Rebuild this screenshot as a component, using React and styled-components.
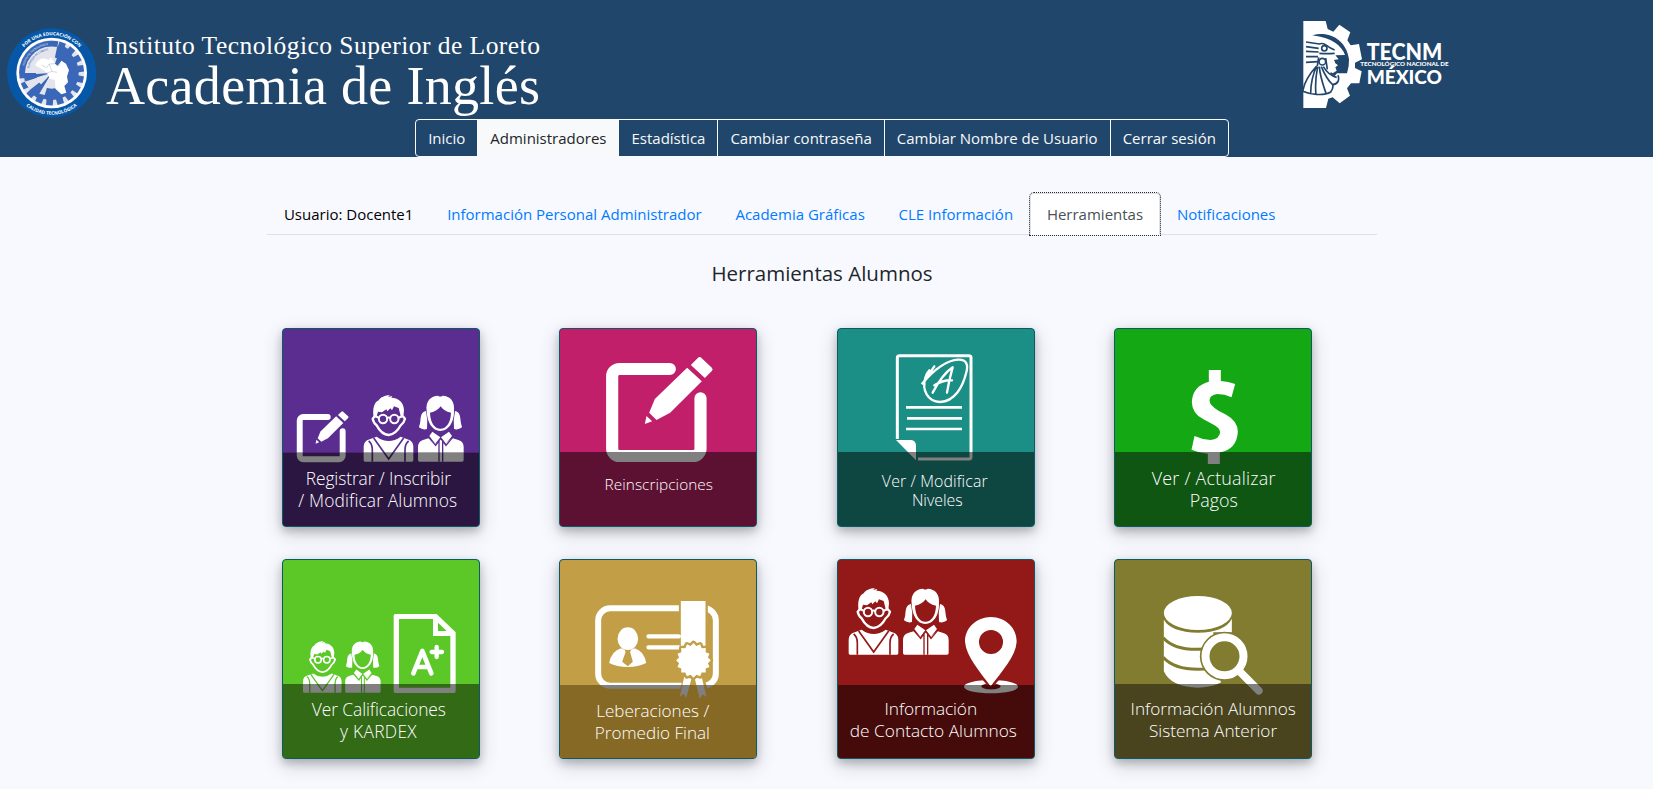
import React from 'react';
import styled, { createGlobalStyle, css } from 'styled-components';

const GlobalStyle = createGlobalStyle`
  * { box-sizing: border-box; }
  body {
    margin: 0;
    background: #f8f9ff;
    color: #212529;
    font-family: "Open Sans", "Noto Sans", sans-serif;
    font-size: 15px;
  }
`;

/* ---------- header ---------- */

const Header = styled.header`
  height: 157px;
  padding-right: 9px;
  background: #21466c;
  display: flex;
  flex-direction: column;
  align-items: center;
`;

const BrandRow = styled.div`
  align-self: stretch;
  height: 119px;
  display: flex;
  justify-content: space-between;
  align-items: flex-start;
  padding: 20px 194px 0 6px;
`;

const Brand = styled.div`
  display: flex;
  gap: 9px;
`;

const Seal = styled.svg`
  width: 91px;
  height: 90px;
  margin-top: 8px;
  font-family: "Open Sans", sans-serif;
`;

const BrandText = styled.div`
  padding-top: 11px;
  color: #fff;
  font-family: "Liberation Serif", serif;
  white-space: nowrap;
`;

const Institute = styled.div`
  font-size: 25.5px;
  line-height: 30px;
  letter-spacing: 0.47px;
`;

const Academy = styled.div`
  font-size: 54px;
  line-height: 50px;
  letter-spacing: 0.3px;
`;

const TecLogo = styled.svg`
  width: 148px;
  height: 90px;
  font-family: Lato, sans-serif;
`;

const Nav = styled.nav`
  display: flex;
`;

const NavButton = styled.a`
  height: 38px;
  padding: 0 12px;
  border: 1px solid #f8f9fa;
  color: #f8f9fa;
  line-height: 36px;
  white-space: nowrap;
  & + & { margin-left: -1px; }
  &:first-child { border-radius: 4px 0 0 4px; }
  &:last-child { border-radius: 0 4px 4px 0; }
  ${(p) => p.$active && css`
    background: #f8f9fa;
    color: #212529;
  `}
`;

/* ---------- content ---------- */

const Page = styled.div`
  padding-right: 9px;
`;

const Container = styled.main`
  width: 1110px;
  margin: 0 auto;
  padding-top: 36px;
`;

const Tabs = styled.div`
  display: flex;
  height: 42px;
  border-bottom: 1px solid #dee2e6;
`;

const Tab = styled.a`
  height: 42px;
  padding: 0 15.9px;
  border: 1px solid transparent;
  border-radius: 4px 4px 0 0;
  color: ${(p) => (p.$plain ? '#000' : '#007bff')};
  line-height: 40px;
  white-space: nowrap;
  ${(p) => p.$active && css`
    background: #fff;
    color: #495057;
    border-color: #dee2e6 #dee2e6 #fff;
    outline: 1px dotted #212529;
  `}
`;

const Title = styled.h4`
  margin: 0;
  height: 93px;
  padding-top: 23px;
  font-size: 20.5px;
  font-weight: 400;
  line-height: 30px;
  text-align: center;
`;

const Grid = styled.div`
  display: grid;
  grid-template-columns: 277px 278px 277px 278px;
  row-gap: 32px;
  padding-bottom: 30px;
`;

const Tile = styled.a`
  position: relative;
  width: 198px;
  height: ${(p) => p.$height}px;
  margin-left: 15px;
  border: 1px solid #0b5a68;
  border-radius: 4px;
  overflow: hidden;
  background: ${(p) => p.$bg};
  text-decoration: none;
  box-shadow: 0 4px 8px rgba(0, 0, 0, 0.2), 0 6px 20px rgba(0, 0, 0, 0.19);
`;

const Art = styled.svg`
  position: absolute;
  inset: 0;
  width: 100%;
  height: 100%;
`;

const Ink = styled.g`
  color: ${(p) => p.$ink};
  --cut: ${(p) => p.$cut};
  fill: currentColor;
  .line { fill: none; stroke: currentColor; }
  .cut { fill: var(--cut); }
  .cutline { fill: none; stroke: var(--cut); }
`;

const Caption = styled.div`
  position: relative;
  padding-top: ${(p) => p.$top - 1.6}px;
  color: #fff;
  font-weight: 300;
  font-size: ${(p) => p.$size}px;
  line-height: ${(p) => p.$leading || 22}px;
  text-align: center;
  white-space: nowrap;
`;

const Line = styled.div`
  margin-left: ${(p) => p.$shift * 2}px;
  letter-spacing: ${(p) => p.$track}px;
`;

/* ---------- drawings ---------- */

function Edit() {
  return (
    <g>
      <path className="line" strokeWidth="36.5" strokeLinecap="round" d="M375 162H224a22 22 0 0 0-22 22V401a22 22 0 0 0 22 22H445a22 22 0 0 0 22-22V250" />
      <path d="M438 150 459 129q5-6 11 0L501 158q5 5 0 10L480 189Z" />
      <path d="M427 158 471 199 376 293 335 315 313 293 330 252Z" />
      <path d="M305 303 322 319 300 327Z" />
    </g>
  );
}

function Kids() {
  return (
    <g>
      <path d="M311 307C307 282 312 262 326 256 331 247 345 241 360 241L354 246 367 243 364 248C388 249 402 264 402 286L400 307H393L386 279 372 274 366 286 361 280 352 289 349 283 336 292 324 290 319 307Z" />
      <path className="line" strokeWidth="7" strokeLinejoin="round" d="M315 303 308 311Q311 325 320 331 335 359 356 360 378 358 392 331 402 324 405 311L398 303" />
      <g className="line" strokeWidth="6">
        <circle cx="339" cy="312" r="12.5" />
        <circle cx="373" cy="312" r="12.5" />
        <path d="M350 310Q356 305 362 310M327 309 316 303M385 309 397 303" />
      </g>
      <path d="M281 436V395Q281 378 299 373L320 365Q356 391 392 365L412 373Q430 378 430 395V436Q430 440 426 440H285Q281 440 281 436Z" />
      <path className="cutline" strokeWidth="5" d="M311 369 356 432 401 369M296 378Q307 386 307 405V440M416 378Q405 386 405 405V440" />

      <path fillRule="evenodd" d="M470 288C466 257 484 242 504 242Q511 247 518 242C540 243 555 258 552 288 553 321 535 348 511 348 487 348 471 321 470 288ZM480 293C481 323 494 341 511 341 529 341 542 323 543 293 528 290 518 284 512 274 505 284 495 290 480 293Z" />
      <path d="M468 288C454 290 452 304 451 319 450 329 448 330 447 337Q458 346 471 342 474 315 468 288ZM555 288C569 290 571 304 572 319 573 329 575 330 576 337Q565 346 552 342 549 315 555 288Z" />
      <path d="M444 435V396Q444 380 459 375L478 369 498 388 509 373H514L526 388 546 369 565 375Q581 380 581 396V435Q581 440 576 440H449Q444 440 444 435Z" />
      <path d="M487 350 511 367 496 386 478 363ZM537 350 513 367 528 386 546 363Z" />
      <path className="cutline" strokeWidth="4" d="M474 365 497 391 512 370 528 391 550 365M507 374V440M518 376V440" />
    </g>
  );
}

const RegisterArt = () => (
  <>
    <g transform="translate(-9 227.4) scale(.486 .485)"><Edit /></g>
    <Kids />
  </>
);

const LevelsArt = () => (
  <>
    <path className="line" strokeWidth="9" d="M217 372V128Q217 122 223 122H432Q438 122 438 128V426Q438 432 432 432H279" />
    <path d="M213 375H258Q273 377 273 393V436Z" />
    <path className="line" strokeWidth="8" d="M243 277H411M246 310H411M243 342H411" />
    <path className="line" strokeWidth="7" strokeLinecap="round" d="M328 154C318 168 306 190 290 208 320 172 360 136 400 134 425 133 430 150 424 172 414 214 390 260 345 261 308 260 290 226 301 188Q304 176 313 166" />
    <path className="line" strokeWidth="7" strokeLinecap="round" strokeLinejoin="round" d="M323 233Q352 178 383 157 372 195 366 233M328 211Q355 194 381 196" />
  </>
);

const PaymentArt = () => (
  <>
    <path d="M327 165H363V198Q386 200 406 207L395 247Q374 237 353 237 330 239 329 256 329 272 356 287L379 299Q414 318 414 350 411 403 360 412V447H324V416Q298 414 275 404L284 363Q308 374 332 375 358 374 361 352 360 337 336 326L311 313Q276 295 276 260 279 213 327 200Z" />
  </>
);

const GradesArt = () => (
  <>
    <g transform="translate(-119 102) scale(.776)"><Kids /></g>
    <path fillRule="evenodd" d="M376 207H500L557 262V439Q557 444 552 444H376Q371 444 371 439V212Q371 207 376 207ZM387 222V428H541V273H489V222ZM504 233V258H530Z" />
    <path className="line" strokeWidth="14" strokeLinecap="round" strokeLinejoin="round" d="M430 385 457 318 484 385M440 366H474" />
    <path className="line" strokeWidth="13" strokeLinecap="round" d="M500 306V336M485 321H516" />
  </>
);

const star = Array.from({ length: 32 }, (_, i) => {
  const r = i % 2 ? 44 : 52;
  const a = (i * Math.PI) / 16;
  return `${(446 + r * Math.sin(a)).toFixed(1)},${(346 - r * Math.cos(a)).toFixed(1)}`;
}).join(' ');

const ReleaseArt = () => (
  <>
    <rect className="line" strokeWidth="18" x="160" y="190" width="353" height="232" rx="36" />
    <path className="cut" d="M402 175H489V300H402Z" />
    <ellipse cx="249" cy="281" rx="31" ry="34" />
    <path d="M193 354Q200 318 229 310 249 322 269 310 298 318 304 354 280 366 249 366 217 366 193 354Z" />
    <path className="cut" d="M240 315H258L256 322 264 350 249 364 232 350 242 322Z" />
    <path className="line" strokeWidth="13" strokeLinecap="round" d="M311 274H402M311 307H402" />
    <path d="M408 168H482V306H408Z" />
    <path className="cut" d="M414 400 400 458H496L478 398Z" />
    <path d="M418 396 440 401 424 459 417 446 405 455ZM450 401 470 394 485 456 473 448 465 462Z" />
    <polygon className="cutline" strokeWidth="14" strokeLinejoin="round" points={star} />
    <polygon strokeLinejoin="round" points={star} />
  </>
);

const ContactArt = () => (
  <>
    <g transform="translate(-210 -111)"><Kids /></g>
    <ellipse cx="498" cy="425" rx="81" ry="20" />
    <ellipse className="cut" cx="498" cy="424" rx="29" ry="9" />
    <path className="cutline" strokeWidth="12" d="M464 384 497 424 532 384" />
    <path fillRule="evenodd" d="M498 216C542 217 575 248 575 290 572 336 530 378 497 424 464 378 424 336 420 290 420 248 454 217 498 216ZM498 255A36 36 0 1 0 498 327 36 36 0 1 0 498 255Z" />
  </>
);

const ArchiveArt = () => (
  <>
    <ellipse cx="294" cy="204" rx="102" ry="51" />
    <path d="M192 224Q213 261 294 263 376 261 396 221V375Q376 426 294 428 213 426 192 379Z" />
    <path className="cutline" strokeWidth="9" d="M190 278Q222 314 294 313 340 313 370 300M190 337Q222 373 294 373 330 373 350 368" />
    <path className="cut" d="M340 262H400V430H366Z" />
    <circle className="cut" cx="374" cy="334" r="74" />
    <circle className="line" strokeWidth="24" cx="374" cy="334" r="57" />
    <path className="line" strokeWidth="23" strokeLinecap="round" d="M416 376 477 437" />
  </>
);

const tiles = [
  { id: 'registrar', art: RegisterArt, bg: '#5b2d90', band: '#2b1641', split: 413, top: 139.3, size: 17.4,
    lines: [['Registrar / Inscribir', -2.7, -0.1], ['/ Modificar Alumnos', -3.2, 0.14]] },
  { id: 'reinscribir', art: Edit, bg: '#c21f6a', band: '#5c1032', split: 411, top: 147, size: 15.4,
    lines: [['Reinscripciones', 0.8, 0.05]] },
  { id: 'niveles', art: LevelsArt, bg: '#1b8e85', band: '#0e4642', split: 411, top: 144.3, size: 15.9, leading: 19.7,
    lines: [['Ver / Modificar', -1.2, 0.1], ['Niveles', 1.3, 0]] },
  { id: 'pagos', art: PaymentArt, bg: '#14a815', band: '#0f5612', split: 411, top: 140, size: 17.9,
    lines: [['Ver / Actualizar', 0.7, 0.2], ['Pagos', 0.8, 0]] },
  { id: 'kardex', art: GradesArt, bg: '#5cc828', band: '#326a16', split: 417, top: 139.6, size: 17.4,
    lines: [['Ver Calificaciones', -2.2, -0.1], ['y KARDEX', -2.5, 0.3]] },
  { id: 'liberaciones', art: ReleaseArt, bg: '#c29e46', band: '#876926', split: 420, top: 141.6, size: 17.1,
    lines: [['Leberaciones /', -5.3, 0], ['Promedio Final', -5.6, 0]] },
  { id: 'contacto', art: ContactArt, bg: '#931818', band: '#450b0b', split: 420, top: 140, size: 17.3,
    lines: [['Información', -5.2, -0.1], ['de Contacto Alumnos', -2.7, 0]] },
  { id: 'anterior', art: ArchiveArt, bg: '#817c2f', band: '#49441d', split: 417, top: 140, size: 17.2,
    lines: [['Información Alumnos', 0.2, 0], ['Sistema Anterior', 0, 0]] },
];

function ToolTile({ tile, index }) {
  const x = index % 2 ? 45.5 : 39;
  const y = index < 4 ? 42 : 45;
  const h = index < 4 ? 591 : 594;
  const Drawing = tile.art;
  return (
    <Tile href="#" $bg={tile.bg} $height={index < 4 ? 199 : 200}>
      <Art viewBox={`${x} ${y} 588 ${h}`} preserveAspectRatio="none" aria-hidden="true">
        <clipPath id={tile.id}>
          <rect x="0" y={tile.split} width="700" height="300" />
        </clipPath>
        <Ink $ink="#fff" $cut={tile.bg}><Drawing /></Ink>
        <rect x="0" y={tile.split} width="700" height="300" fill={tile.band} />
        <Ink $ink="#808080" $cut={tile.band} clipPath={`url(#${tile.id})`}><Drawing /></Ink>
      </Art>
      <Caption $top={tile.top} $size={tile.size} $leading={tile.leading}>
        {tile.lines.map(([text, shift, track]) => (
          <Line key={text} $shift={shift} $track={track}>{text}</Line>
        ))}
      </Caption>
    </Tile>
  );
}

const teeth = Array.from({ length: 13 }, (_, i) => 20 + i * 20.5);

function SchoolSeal() {
  return (
    <Seal viewBox="18 25 273 270" aria-hidden="true">
      <defs>
        <path id="arcTop" d="M42 160A113 113 0 0 1 268 160" />
        <path id="arcBottom" d="M30 160A125 125 0 0 0 280 160" />
        <path id="arcInner" d="M70 160A85 85 0 0 1 155 75" />
        <path id="arcInner2" d="M86 160A69 69 0 0 1 155 91" />
      </defs>
      <circle cx="155" cy="160" r="134" fill="#0657a8" />
      <circle cx="155" cy="160" r="106" fill="#fff" />
      <circle cx="155" cy="160" r="98" fill="#e4e5ec" />
      <circle cx="155" cy="160" r="64" fill="none" stroke="#3a67b7" strokeWidth="34" />
      <g fill="#3a67b7">
        {teeth.map((a) => (
          <path key={a} d="M145 63H165V85H145Z" transform={`rotate(${a} 155 160)`} />
        ))}
      </g>
      <path d="M155 160H57A98 98 0 0 1 175 64Z" fill="#e4e5ec" />
      <path d="M57 160A98 98 0 0 1 175 65L172 82A80 80 0 0 0 75 160Z" fill="#3a67b7" />
      <path d="M155 160 72 165 74 184ZM155 160 96 223 113 236ZM155 160 185 75 210 92Z" fill="#3a67b7" />
      <path d="M155 160 74 186 90 210ZM155 160 118 222 134 226Z" fill="#e4e5ec" />
      <path d="M105 137Q113 118 132 116L146 121 153 113 165 132 177 142 184 123 198 132 207 152 201 170 204 188 193 199 199 219 184 224 166 207 165 181 149 177 142 160 121 146Z" fill="#fff" />
      <path d="M126 137 140 144 148 133 165 132M148 133 156 155 171 158M142 160 156 155" fill="none" stroke="#c4c7d6" strokeWidth="2" />
      <g fill="#fff" fontSize="14" fontWeight="700">
        <text textAnchor="middle"><textPath href="#arcTop" startOffset="50%">POR UNA EDUCACIÓN CON</textPath></text>
        <text textAnchor="middle"><textPath href="#arcBottom" startOffset="50%">CALIDAD TECNOLÓGICA</textPath></text>
      </g>
      <g fontSize="8" fontWeight="600">
        <text fill="#dfe5f5" textAnchor="middle"><textPath href="#arcInner" startOffset="54%">INSTITUTO TECNOLÓGICO</textPath></text>
        <text fill="#3a67b7" textAnchor="middle"><textPath href="#arcInner2" startOffset="52%">SUPERIOR DE LORETO</textPath></text>
      </g>
    </Seal>
  );
}

function TecnmLogo() {
  return (
    <TecLogo viewBox="66 60 444 270" aria-hidden="true">
      <path fill="#fff" d="M70 63H137L143 87 160 95 178 74 211 97 202 121 212 136 237 132 246 178 225 188V204L245 214 238 250H213L201 265 210 287 179 310 158 292 145 296 138 324H70Z" />
      <path fill="#21466c" d="M97 106C148 91 200 121 207 178L206 198 201 220H171L164 228 150 222 154 214 146 208 156 202 143 196 160 180 176 178 166 166 195 165C186 138 155 113 97 106Z" />
      <path fill="#fff" d="M124 116C150 122 165 135 168 162L163 171H130L116 160 119 143Z" />
      <path fill="#fff" d="M132 172 160 174 166 190 174 196 166 202 170 212 158 220 140 208Z" />
      <g fill="none" stroke="#21466c" strokeWidth="5">
        <path d="M78 126 118 132M78 140 116 145M78 154 116 156M78 170 114 170M78 187 114 185M116 132Q128 128 136 134 152 146 164 150M118 160Q140 162 164 160" />
        <circle cx="133" cy="145" r="8" />
        <circle cx="127" cy="185" r="10" />
        <path d="M137 174 142 208M116 172 112 198M110 198C88 222 72 250 68 274 88 283 130 289 152 276 158 268 160 260 158 254 174 252 179 240 174 226M110 198C99 222 92 252 92 280M113 200C107 230 105 255 108 284M118 200C120 230 128 250 138 280M124 200C134 224 144 242 158 254M130 200C142 220 152 228 170 232" />
      </g>
      <g fill="#fff" fontWeight="900">
        <text x="260" y="180" fontSize="66" textLength="227" lengthAdjust="spacingAndGlyphs">TECNM</text>
        <text x="241" y="199" fontSize="16.5" textLength="265" lengthAdjust="spacingAndGlyphs">TECNOLÓGICO NACIONAL DE</text>
        <text x="260" y="253" fontSize="55" textLength="226" lengthAdjust="spacingAndGlyphs">MÉXICO</text>
      </g>
    </TecLogo>
  );
}

const navItems = ['Inicio', 'Administradores', 'Estadística', 'Cambiar contraseña', 'Cambiar Nombre de Usuario', 'Cerrar sesión'];
const tabItems = ['Información Personal Administrador', 'Academia Gráficas', 'CLE Información', 'Herramientas', 'Notificaciones'];

export default function App() {
  return (
    <>
      <GlobalStyle />
      <Header>
        <BrandRow>
          <Brand>
            <SchoolSeal />
            <BrandText>
              <Institute>Instituto Tecnológico Superior de Loreto</Institute>
              <Academy>Academia de Inglés</Academy>
            </BrandText>
          </Brand>
          <TecnmLogo />
        </BrandRow>
        <Nav>
          {navItems.map((item) => (
            <NavButton key={item} $active={item === 'Administradores'}>{item}</NavButton>
          ))}
        </Nav>
      </Header>
      <Page>
        <Container>
          <Tabs>
            <Tab $plain>Usuario: Docente1</Tab>
            {tabItems.map((item) => (
              <Tab key={item} $active={item === 'Herramientas'}>{item}</Tab>
            ))}
          </Tabs>
          <Title>Herramientas Alumnos</Title>
          <Grid>
            {tiles.map((tile, i) => <ToolTile key={tile.id} tile={tile} index={i} />)}
          </Grid>
        </Container>
      </Page>
    </>
  );
}
